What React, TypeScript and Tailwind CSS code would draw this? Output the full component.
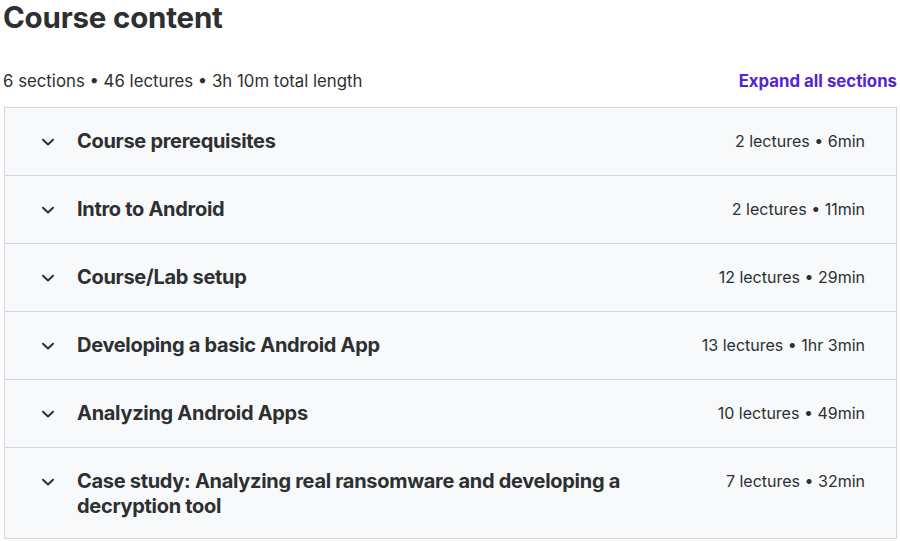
import React from "react";

const sections = [
  { title: "Course prerequisites", meta: "2 lectures • 6min" },
  { title: "Intro to Android", meta: "2 lectures • 11min" },
  { title: "Course/Lab setup", meta: "12 lectures • 29min" },
  { title: "Developing a basic Android App", meta: "13 lectures • 1hr 3min" },
  { title: "Analyzing Android Apps", meta: "10 lectures • 49min" },
  { title: "Case study: Analyzing real ransomware and developing a decryption tool", meta: "7 lectures • 32min" },
];

function Chevron() {
  return (
    <svg width="16" height="16" viewBox="0 0 16 16" fill="none" className="shrink-0">
      <path d="M3 5.75 8 10.5l5-4.75" stroke="#2d2f31" strokeWidth="2" strokeLinecap="round" strokeLinejoin="round" />
    </svg>
  );
}

export default function App() {
  return (
    <div className="w-[900px] h-[541px] bg-white text-[#2d2f31] overflow-hidden" style={{ fontFamily: "Inter, 'Noto Sans', sans-serif" }}>
      <h2 className="pl-[3px] text-[29.5px] leading-[34px] font-bold tracking-[-0.2px]">Course content</h2>
      <div className="flex items-center justify-between pl-[3px] pr-[3px] mt-[34px] h-[28px]">
        <span className="text-[16.8px]">6 sections • 46 lectures • 3h 10m total length</span>
        <span className="text-[16.8px] font-bold text-[#5624d0]">Expand all sections</span>
      </div>
      <div className="ml-[4px] mr-[3px] mt-[11px] border-b border-x border-[#d1d7dc]">
        {sections.map((s, i) => (
          <div key={s.title} className={`flex items-start border-t border-[#d1d7dc] bg-[#f7f9fa] pl-[35px] pr-[31px] pt-[21px] ${i === sections.length - 1 ? "pb-[19px]" : "pb-[21px]"}`}>
            <div className="h-[25px] flex items-center"><Chevron /></div>
            <div className="ml-[21px] flex-1 max-w-[570px] text-[20px] leading-[25px] font-bold tracking-[-0.3px]">{s.title}</div>
            <div className="ml-auto text-[16px] leading-[25px] whitespace-nowrap">{s.meta}</div>
          </div>
        ))}
      </div>
    </div>
  );
}
